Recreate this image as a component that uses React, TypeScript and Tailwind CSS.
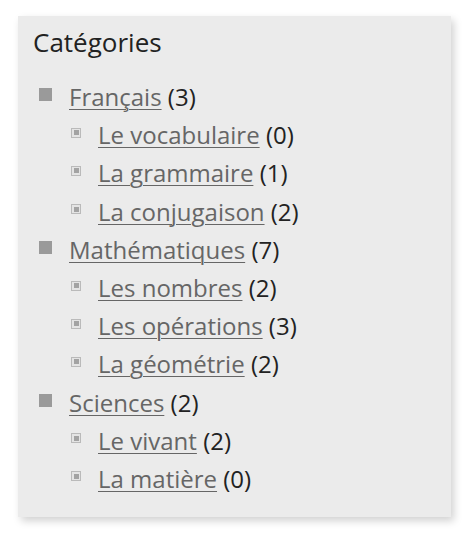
import React from "react";

type Item = { name: string; count: number; children?: Item[] };

const data: Item[] = [
  {
    name: "Français",
    count: 3,
    children: [
      { name: "Le vocabulaire", count: 0 },
      { name: "La grammaire", count: 1 },
      { name: "La conjugaison", count: 2 },
    ],
  },
  {
    name: "Mathématiques",
    count: 7,
    children: [
      { name: "Les nombres", count: 2 },
      { name: "Les opérations", count: 3 },
      { name: "La géométrie", count: 2 },
    ],
  },
  {
    name: "Sciences",
    count: 2,
    children: [
      { name: "Le vivant", count: 2 },
      { name: "La matière", count: 0 },
    ],
  },
];

function Row({ item, level }: { item: Item; level: number }) {
  return (
    <div className="flex items-center h-[38.2px]">
      {level === 0 ? (
        <span className="w-[13px] h-[13px] bg-[#9a9a9a] mr-[17px] shrink-0 -mt-[5px]" />
      ) : (
        <span className="w-[10px] h-[10px] border border-[#bababa] bg-[#e4e4e4] flex items-center justify-center mr-[17px] shrink-0 -mt-[5px]">
          <span className="w-[5px] h-[5px] bg-[#a3a3a3]" />
        </span>
      )}
      <span className="whitespace-nowrap">
        <a href="#" className="text-[#666666] underline underline-offset-[3px] decoration-1">
          {item.name}
        </a>{" "}
        <span className="text-[#222222]">({item.count})</span>
      </span>
    </div>
  );
}

export default function App() {
  return (
    <div className="w-[470px] h-[536px] bg-white pt-[16px] pl-[18px]" style={{ fontFamily: '"Open Sans", "Noto Sans", sans-serif' }}>
      <div className="w-[433px] h-[501px] bg-[#ebebeb] shadow-[3px_4px_8px_rgba(0,0,0,0.18)] pl-[15px] pt-[6px]">
        <h2 className="text-[26px] text-[#222222] leading-[40px] mb-[16px]">Catégories</h2>
        <div className="text-[24px] leading-[38px] pl-[6px]">
          {data.map((cat) => (
            <div key={cat.name}>
              <Row item={cat} level={0} />
              <div className="pl-[32px]">
                {cat.children?.map((c) => (
                  <Row key={c.name} item={c} level={1} />
                ))}
              </div>
            </div>
          ))}
        </div>
      </div>
    </div>
  );
}
